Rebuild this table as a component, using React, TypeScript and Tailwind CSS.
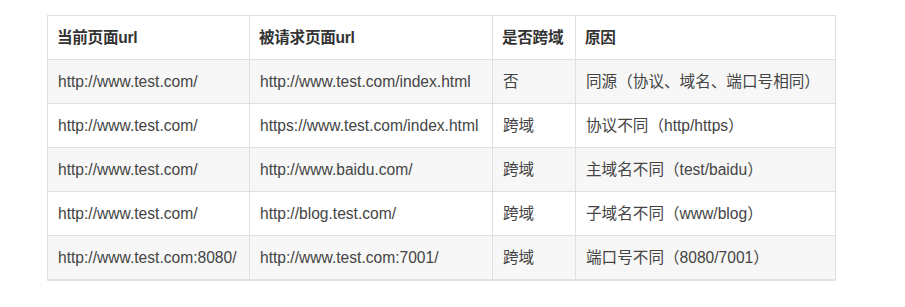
const rows = [
  ["http://www.test.com/", "http://www.test.com/index.html", "否", "同源（协议、域名、端口号相同）"],
  ["http://www.test.com/", "https://www.test.com/index.html", "跨域", "协议不同（http/https）"],
  ["http://www.test.com/", "http://www.baidu.com/", "跨域", "主域名不同（test/baidu）"],
  ["http://www.test.com/", "http://blog.test.com/", "跨域", "子域名不同（www/blog）"],
  ["http://www.test.com:8080/", "http://www.test.com:7001/", "跨域", "端口号不同（8080/7001）"],
];

const headers = ["当前页面url", "被请求页面url", "是否跨域", "原因"];

export default function App() {
  return (
    <div
      className="min-h-[307px] bg-white pl-[47px] pt-[15px] text-[15.6px] text-[#444]"
      style={{ fontFamily: '"Liberation Sans", Arial, "Noto Sans CJK SC", sans-serif' }}
    >
      <table className="w-[788px] table-fixed border-collapse">
        <colgroup>
          <col className="w-[202px]" />
          <col className="w-[243px]" />
          <col className="w-[83px]" />
          <col className="w-[260px]" />
        </colgroup>
        <thead>
          <tr className="h-[44px] bg-white">
            {headers.map((h) => (
              <th
                key={h}
                className="whitespace-nowrap border border-[#dfdfdf] px-[9px] text-left font-bold tracking-[-0.3px] text-[#333]"
              >
                {h}
              </th>
            ))}
          </tr>
        </thead>
        <tbody>
          {rows.map((r, i) => (
            <tr
              key={i}
              className={`h-[44px] ${i % 2 === 0 ? "bg-[#f7f7f7]" : "bg-white"} ${i === rows.length - 1 ? "border-b-2 border-[#e3e3e3]" : ""}`}
            >
              {r.map((c, j) => (
                <td key={j} className="whitespace-nowrap border border-[#dfdfdf] px-[10px]">
                  {c}
                </td>
              ))}
            </tr>
          ))}
        </tbody>
      </table>
    </div>
  );
}
